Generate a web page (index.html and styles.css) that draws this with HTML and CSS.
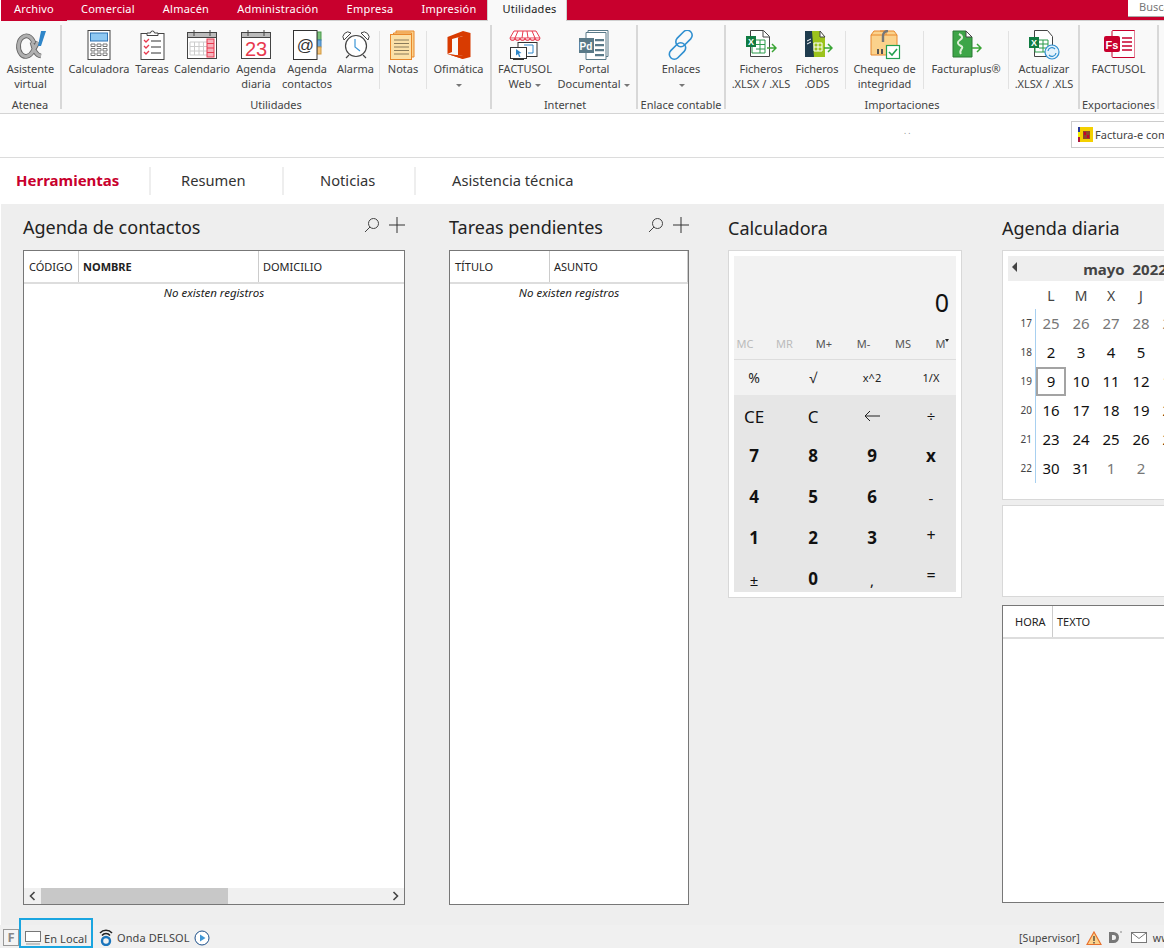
FILE: index.html
```html
<!DOCTYPE html>
<html lang="es">
<head>
<meta charset="utf-8">
<title>Utilidades</title>
<link rel="stylesheet" href="styles.css">
</head>
<body>
<div class="app">
  <header class="menubar">
    <nav class="menutabs">
      <span class="mtab t-archivo">Archivo</span>
      <span class="mtab">Comercial</span>
      <span class="mtab">Almacén</span>
      <span class="mtab">Administración</span>
      <span class="mtab">Empresa</span>
      <span class="mtab t-impresion">Impresión</span>
      <span class="mtab t-util active">Utilidades</span>
    </nav>
    <div class="searchbox">Buscar</div>
  </header>

  <section class="ribbon">
    <div class="group g-atenea">
      <div class="items">
        <div class="item w61">
          <svg class="ico" viewBox="0 0 32 30"><path d="M19 13C16 5 11 5 8 7 3 10 2 19 6 24c3 4 9 3 12-3l5-9M17 12c2 7 3 13 9 14" fill="none" stroke="#666" stroke-width="4.800"/><path d="M19 13C16 5 11 5 8 7 3 10 2 19 6 24c3 4 9 3 12-3l5-9M17 12c2 7 3 13 9 14" fill="none" stroke="#b0b0b0" stroke-width="3"/><path d="M26 1h5l-5 15h-3z" fill="#2f86c9"/></svg>
          <span>Asistente<br>virtual</span>
        </div>
      </div>
      <div class="glabel">Atenea</div>
    </div>

    <div class="group g-util">
      <div class="items">
        <div class="item w62">
          <svg class="ico" viewBox="0 0 32 30"><rect x="5" y="0.5" width="22" height="29" fill="#fff" stroke="#444"/><rect x="7.5" y="3" width="17" height="8" fill="#8ec8f2" stroke="#2e75b6"/><path d="M8 14h4v2.5H8zM14 14h4v2.5h-4zM20 14h4v2.5h-4zM8 18.5h4V21H8zM14 18.5h4V21h-4zM20 18.5h4V21h-4zM8 23h4v2.5H8zM14 23h4v2.5h-4zM20 23h4v2.5h-4z" fill="#fff" stroke="#777"/></svg>
          <span>Calculadora</span>
        </div>
        <div class="item w44">
          <svg class="ico" viewBox="0 0 32 30"><rect x="5" y="3.500" width="23" height="26" fill="#fff" stroke="#444"/><path d="M11 5V3h3.500a2 2 0 0 1 4 0H22v2.500H11z" fill="#fff" stroke="#444"/><path d="M8 10l2 2 3-3M8 16l2 2 3-3M8 22l2 2 3-3" fill="none" stroke="#e8394e" stroke-width="1.300"/><path d="M15 11h10M15 17h10M15 23h10" stroke="#333"/></svg>
          <span>Tareas</span>
        </div>
        <div class="item w56">
          <svg class="ico" viewBox="0 0 32 30"><rect x="1.500" y="2.500" width="29" height="26" fill="#fff" stroke="#444"/><rect x="1.500" y="2.500" width="29" height="5" fill="#bbb" stroke="#444"/><path d="M8 0v6M24 0v6" stroke="#444"/><path d="M4 12h18v13H4z" fill="#fff" stroke="#ccc"/><path d="M4 16.500h18M4 21h18M8.500 12v13M13 12v13M17.500 12v13" stroke="#ccc"/><rect x="21" y="9" width="7" height="18" fill="#f6b2bc" stroke="#e8394e"/><path d="M21 13.500h7M21 18h7M21 22.500h7" stroke="#e8394e"/></svg>
          <span>Calendario</span>
        </div>
        <div class="item w52">
          <svg class="ico" viewBox="0 0 32 30"><rect x="1.500" y="2.500" width="29" height="26" fill="#fff" stroke="#444"/><rect x="1.500" y="2.500" width="29" height="5" fill="#bbb" stroke="#444"/><path d="M8 0v6M24 0v6" stroke="#444"/><text x="16" y="26" text-anchor="middle" class="ico-num">23</text></svg>
          <span>Agenda<br>diaria</span>
        </div>
        <div class="item w50">
          <svg class="ico" viewBox="0 0 32 30"><rect x="26" y="2" width="4" height="8" fill="#7cc27c" stroke="#4a9a4a"/><rect x="26" y="10" width="4" height="7" fill="#6aa9dd" stroke="#3c7fb8"/><rect x="26" y="17" width="4" height="7" fill="#f2c27a" stroke="#d39a3e"/><rect x="2.500" y="0.500" width="23.500" height="29" fill="#fff" stroke="#333"/><text x="14.500" y="21" text-anchor="middle" class="ico-at">@</text></svg>
          <span>Agenda<br>contactos</span>
        </div>
        <div class="item w47">
          <svg class="ico" viewBox="0 0 32 30"><circle cx="16" cy="16" r="10.500" fill="#fff" stroke="#444" stroke-width="1.200"/><path d="M4 10a5 5 0 0 1 7-7zM28 10a5 5 0 0 0-7-7z" fill="#fff" stroke="#444"/><path d="M9 25l-3 3M23 25l3 3" stroke="#444" stroke-width="1.200"/><path d="M15 9v8l5 4" fill="none" stroke="#3f97d6" stroke-width="1.200"/></svg>
          <span>Alarma</span>
        </div>
        <i class="sep"></i>
        <div class="item w46">
          <svg class="ico" viewBox="0 0 32 30"><path d="M9 1h18v26H9z" fill="#fbd28c" stroke="#e8882c"/><path d="M6.500 3h18v26h-18z" fill="#fbd89c" stroke="#e8882c"/><rect x="3.500" y="4.500" width="21" height="25" fill="#fbe0a8" stroke="#e8882c"/><path d="M7 10h15M7 13.500h15M7 17h15M7 20.500h15M7 24h15" stroke="#8a7a5a"/></svg>
          <span>Notas</span>
        </div>
        <i class="sep"></i>
        <div class="item w63">
          <svg class="ico" viewBox="0 0 32 30"><path d="M4.500 7L20 1l7.500 2v24L20 29 4.500 24z" fill="#d83b01"/><path d="M9 9l11-3v20L4.500 24 9 22z" fill="#f9f9f9"/><path d="M15 7.400l5-1.400v20l-5-.7z" fill="#d83b01"/><path d="M4.500 24L20 26v3z" fill="#d83b01"/></svg>
          <span>Ofimática<br><b class="caret"></b></span>
        </div>
      </div>
      <div class="glabel">Utilidades</div>
    </div>

    <div class="group g-internet">
      <div class="items">
        <div class="item w62">
          <svg class="ico" viewBox="0 0 32 30"><path d="M5 1h22l4 7H1z" fill="#fff" stroke="#e8394e"/><path d="M1 8a2.500 2.500 0 0 0 5 0 2.500 2.500 0 0 0 5 0 2.500 2.500 0 0 0 5 0 2.500 2.500 0 0 0 5 0 2.500 2.500 0 0 0 5 0 2.500 2.500 0 0 0 5 0" fill="#f6b2bc" stroke="#e8394e"/><path d="M9 1L6 8M14 1l-1 7M18 1l1 7M23 1l3 7" stroke="#e8394e"/><rect x="9" y="12.500" width="19" height="14" fill="#fff" stroke="#333"/><path d="M15 15h9v8h-5" fill="none" stroke="#2e86c9"/><rect x="1.500" y="17.500" width="16" height="11" fill="#fff" stroke="#333"/><path d="M4 29.500h11" stroke="#333"/><path d="M7 19l5.500 4-2.500.5 1.500 3-1.500.5-1-3-2 1.500z" fill="#2e86c9"/></svg>
          <span>FACTUSOL<br>Web <b class="caret"></b></span>
        </div>
        <div class="item w76">
          <svg class="ico" viewBox="0 0 32 30"><path d="M10 .5h20v26H10z" fill="#fff" stroke="#5a7a88"/><path d="M8 2.500h20v27H8z" fill="#fff" stroke="#5a7a88"/><path d="M17 9h9v2.200h-9zM17 14h9v2.200h-9zM17 19h9v2.200h-9zM17 24h9v2.200h-9z" fill="#5a7a88"/><rect x="1" y="8" width="15" height="15" fill="#5a7a88"/><text x="8" y="20" text-anchor="middle" class="ico-pd">Pd</text></svg>
          <span>Portal<br>Documental <b class="caret"></b></span>
        </div>
      </div>
      <div class="glabel">Internet</div>
    </div>

    <div class="group g-enlace">
      <div class="items">
        <div class="item wfull">
          <svg class="ico" viewBox="0 0 32 30"><g fill="none" stroke="#2f8fd0" stroke-width="1.600"><rect x="14" y="-1" width="10" height="19" rx="5" transform="rotate(45 19 8.500)"/><rect x="7.500" y="11.500" width="10" height="19" rx="5" transform="rotate(45 12.500 21)"/></g></svg>
          <span>Enlaces<br><b class="caret"></b></span>
        </div>
      </div>
      <div class="glabel">Enlace contable</div>
    </div>

    <div class="group g-import">
      <div class="items">
        <div class="item w56">
          <svg class="ico" viewBox="0 0 32 30"><path d="M5.500.5h13l6 6v20h-19z" fill="#fff" stroke="#444"/><path d="M18 1v6h6" fill="none" stroke="#444"/><path d="M11 10h9v13H7v-6M11 14.500h9M11 19h9M15 10v13" fill="none" stroke="#2a9a4a"/><rect x="1" y="6" width="10" height="11" fill="#107c41"/><text x="6" y="15" text-anchor="middle" class="ico-x">X</text><path d="M22 18h9M27 14l4 4-4 4" fill="none" stroke="#3aa535" stroke-width="1.500"/></svg>
          <span>Ficheros<br>.XLSX / .XLS</span>
        </div>
        <div class="item w56">
          <svg class="ico" viewBox="0 0 32 30"><path d="M4 1h12v26H4z" fill="#1f3c4e"/><path d="M11 1h8l5 6v20H13z" fill="#9cc31c"/><path d="M19 1v6h5z" fill="#fff" stroke="#444"/><path d="M13 13h8v8h-8zM13 17h8M17 13v8" fill="none" stroke="#fff"/><path d="M6 11l4-2M6 14l4-2" stroke="#fff"/><path d="M23 18h8M27 14l4 4-4 4" fill="none" stroke="#3aa535" stroke-width="1.500"/></svg>
          <span>Ficheros<br>.ODS</span>
        </div>
        <i class="sep"></i>
        <div class="item w77">
          <svg class="ico" viewBox="0 0 32 30"><path d="M2 5l3-4h20l3 4v20H2z" fill="#fbd28c" stroke="#e8882c"/><path d="M2 5h26M11 1h6v4" fill="none" stroke="#e8882c"/><path d="M14 12V6c0-3 2-5 5-5" fill="none" stroke="#777" stroke-width="2.400"/><path d="M8 19h2v5H8zM12 19h2v5h-2z" fill="#555"/><rect x="17.500" y="15.500" width="13" height="13" fill="#fff" stroke="#22a050" stroke-width="1.200"/><path d="M20 22l3 3 5-6" fill="none" stroke="#22a050" stroke-width="1.600"/></svg>
          <span>Chequeo de<br>integridad</span>
        </div>
        <i class="sep"></i>
        <div class="item w84">
          <svg class="ico" viewBox="0 0 32 30"><path d="M3 1h13l6 6v20H3z" fill="#3da547" stroke="#2a7a34"/><path d="M16 1v6h6z" fill="#fff" stroke="#444"/><path d="M9 4c4 2 4 4 1 6s-3 4 1 6-3 4 0 8" fill="none" stroke="#dff0d8" stroke-width="2"/><path d="M22 18h9M27 14l4 4-4 4" fill="none" stroke="#3aa535" stroke-width="1.500"/></svg>
          <span>Facturaplus®</span>
        </div>
        <i class="sep"></i>
        <div class="item w70">
          <svg class="ico" viewBox="0 0 32 30"><path d="M6.500.5h13l5 6v20h-18z" fill="#fff" stroke="#444"/><path d="M11 10h9v12H7v-4M11 14h9M11 18h9M15 10v12" fill="none" stroke="#2a9a4a"/><rect x="1" y="7" width="10" height="11" fill="#107c41"/><text x="6" y="16" text-anchor="middle" class="ico-x">X</text><circle cx="24" cy="22" r="7" fill="#e4f2fb" stroke="#2f8fd0" stroke-width="1.200"/><path d="M20 21a4 4 0 0 1 7-2M28 23a4 4 0 0 1-7 2" fill="none" stroke="#2f8fd0" stroke-width="1.200"/></svg>
          <span>Actualizar<br>.XLSX / .XLS</span>
        </div>
      </div>
      <div class="glabel">Importaciones</div>
    </div>

    <div class="group g-export">
      <div class="items">
        <div class="item wfull">
          <svg class="ico" viewBox="0 0 32 30"><rect x="9" y=".5" width="23" height="27" rx="1" fill="#fff" stroke="#c8002d"/><path d="M19 8h10M19 12h10M19 16h10M19 20h10" stroke="#c8002d" stroke-width="1.500"/><rect x="1" y="6" width="16" height="16" rx="2" fill="#c8002d"/><text x="9" y="18.500" text-anchor="middle" class="ico-fs">Fs</text></svg>
          <span>FACTUSOL</span>
        </div>
      </div>
      <div class="glabel">Exportaciones</div>
    </div>
  </section>

  <div class="strip">
    <span class="dots">. .</span>
    <div class="fbutton">
      <svg class="flag" viewBox="0 0 15 15"><rect width="15" height="15" fill="#f4d000"/><rect width="2" height="5" fill="#2a3a9a"/><rect y="5" width="2" height="5" fill="#f4f000"/><rect y="10" width="2" height="5" fill="#b0183a"/><rect x="5" y="4" width="7" height="8" fill="#8a4a2a"/><path d="M6 5h2v3H6zM9 8h2v3H9z" fill="#c8002d"/></svg>
      <span>Factura-e común</span>
    </div>
  </div>

  <nav class="sections">
    <span class="sec s1 current">Herramientas</span>
    <span class="sec s2">Resumen</span>
    <span class="sec s3">Noticias</span>
    <span class="sec s4">Asistencia técnica</span>
  </nav>

  <main class="content">
    <section class="col c-contacts">
      <div class="coltitle"><h2>Agenda de contactos</h2>
        <div class="tools">
          <svg class="tool" viewBox="0 0 16 16"><circle cx="9.500" cy="6.500" r="5" fill="none" stroke="#444"/><path d="M6 10l-5 5" stroke="#444"/></svg>
          <svg class="tool" viewBox="0 0 16 16"><path d="M8 0v16M0 8h16" stroke="#333"/></svg>
        </div>
      </div>
      <div class="table">
        <div class="thead">
          <span class="th th-cod">CÓDIGO</span><span class="th th-nom">NOMBRE</span><span class="th th-dom">DOMICILIO</span>
        </div>
        <div class="empty">No existen registros</div>
        <div class="hscroll">
          <svg class="arrow" viewBox="0 0 8 10"><path d="M6 1L2 5l4 4" fill="none" stroke="#444" stroke-width="1.600"/></svg>
          <div class="track"><div class="thumb"></div></div>
          <svg class="arrow" viewBox="0 0 8 10"><path d="M2 1l4 4-4 4" fill="none" stroke="#444" stroke-width="1.600"/></svg>
        </div>
      </div>
    </section>

    <section class="col c-tasks">
      <div class="coltitle"><h2>Tareas pendientes</h2>
        <div class="tools">
          <svg class="tool" viewBox="0 0 16 16"><circle cx="9.500" cy="6.500" r="5" fill="none" stroke="#444"/><path d="M6 10l-5 5" stroke="#444"/></svg>
          <svg class="tool" viewBox="0 0 16 16"><path d="M8 0v16M0 8h16" stroke="#333"/></svg>
        </div>
      </div>
      <div class="table">
        <div class="thead">
          <span class="th th-tit">TÍTULO</span><span class="th th-asu">ASUNTO</span>
        </div>
        <div class="empty">No existen registros</div>
      </div>
    </section>

    <section class="col c-calc">
      <div class="coltitle low"><h2>Calculadora</h2></div>
      <div class="calc">
        <div class="calc-inner">
          <div class="display">0</div>
          <div class="memory">
            <span class="off">MC</span><span class="off">MR</span><span>M+</span><span>M-</span><span>MS</span><span>M<b class="mcaret"></b></span>
          </div>
          <div class="funcs">
            <span class="f-lg">%</span><span class="f-lg">√</span><span>x^2</span><span>1/X</span>
          </div>
          <div class="keys">
            <span class="k-op">CE</span><span class="k-op">C</span>
            <span class="k-op"><svg class="backarrow" viewBox="0 0 16 12"><path d="M16 6H1M6 1L1 6l5 5" fill="none" stroke="#222"/></svg></span>
            <span class="k-sym">÷</span>
            <span class="k-num">7</span><span class="k-num">8</span><span class="k-num">9</span><span class="k-num">x</span>
            <span class="k-num">4</span><span class="k-num">5</span><span class="k-num">6</span><span class="k-sym">-</span>
            <span class="k-num">1</span><span class="k-num">2</span><span class="k-num">3</span><span class="k-sym k-up">+</span>
            <span class="k-sym">±</span><span class="k-num">0</span><span class="k-sym">,</span><span class="k-sym k-up2">=</span>
          </div>
        </div>
      </div>
    </section>

    <section class="col c-agenda">
      <div class="coltitle low"><h2>Agenda diaria</h2></div>
      <div class="cal">
        <div class="calhead"><b class="tri-left"></b><strong>mayo&nbsp; 2022</strong><b class="tri-right"></b></div>
        <div class="calgrid">
          <span></span><span class="wd">L</span><span class="wd">M</span><span class="wd">X</span><span class="wd">J</span><span class="wd">V</span><span class="wd">S</span><span class="wd">D</span>
          <span class="wk">17</span><span class="d o">25</span><span class="d o">26</span><span class="d o">27</span><span class="d o">28</span><span class="d o">29</span><span class="d o">30</span><span class="d">1</span>
          <span class="wk">18</span><span class="d">2</span><span class="d">3</span><span class="d">4</span><span class="d">5</span><span class="d">6</span><span class="d">7</span><span class="d">8</span>
          <span class="wk">19</span><span class="d sel">9</span><span class="d">10</span><span class="d">11</span><span class="d">12</span><span class="d">13</span><span class="d">14</span><span class="d">15</span>
          <span class="wk">20</span><span class="d">16</span><span class="d">17</span><span class="d">18</span><span class="d">19</span><span class="d">20</span><span class="d">21</span><span class="d">22</span>
          <span class="wk">21</span><span class="d">23</span><span class="d">24</span><span class="d">25</span><span class="d">26</span><span class="d">27</span><span class="d">28</span><span class="d">29</span>
          <span class="wk">22</span><span class="d">30</span><span class="d">31</span><span class="d o">1</span><span class="d o">2</span><span class="d o">3</span><span class="d o">4</span><span class="d o">5</span>
        </div>
      </div>
      <div class="notebox"></div>
      <div class="table daytable">
        <div class="thead">
          <span class="th th-hora">HORA</span><span class="th th-texto">TEXTO</span>
        </div>
      </div>
    </section>
  </main>

  <footer class="status">
    <div class="st-left">
      <span class="fbox">F</span>
      <div class="local">
        <svg class="monitor" viewBox="0 0 16 14"><rect x=".5" y=".5" width="15" height="10" fill="#fff" stroke="#777"/><path d="M1 13h14" stroke="#999"/></svg>
        <span>En Local</span>
      </div>
      <div class="onda">
        <svg class="onda-ico" viewBox="0 0 14 17"><path d="M1 4a8 8 0 0 1 12 0M3 6.500a5 5 0 0 1 8 0" fill="none" stroke="#222" stroke-width="1.500"/><circle cx="7" cy="12" r="4" fill="none" stroke="#1b75bc" stroke-width="2.400"/></svg>
        <span>Onda DELSOL</span>
        <svg class="play" viewBox="0 0 16 16"><circle cx="8" cy="8" r="7" fill="#fff" stroke="#1b4f8a"/><path d="M6 4.500l5.500 3.500L6 11.500z" fill="#3f97d6"/></svg>
      </div>
    </div>
    <div class="st-right">
      <span class="sup">[Supervisor]</span>
      <svg class="warn" viewBox="0 0 16 14"><path d="M8 1l7 12.500H1z" fill="#fbd28c" stroke="#e8702c" stroke-width="1.200"/><path d="M8 5v5M8 11v1.500" stroke="#333" stroke-width="1.200"/></svg>
      <svg class="dlogo" viewBox="0 0 14 13"><path d="M1 1h4.500a5 5 0 0 1 0 11H1zM4 4v5h1.500a2.500 2.500 0 0 0 0-5z" fill="#777" fill-rule="evenodd"/><rect x="12" y="0" width="2" height="2" fill="#bbb"/></svg>
      <svg class="mail" viewBox="0 0 16 11"><rect x=".5" y=".5" width="15" height="10" fill="#fff" stroke="#777"/><path d="M1 1l7 5.500L15 1" fill="none" stroke="#777"/></svg>
      <span class="web">www.sdelsol.com</span>
    </div>
  </footer>
</div>
</body>
</html>
```
FILE: styles.css
```css
* { box-sizing: border-box; }
html, body { margin: 0; padding: 0; height: 100%; }
body {
  font-family: "Noto Sans", "Open Sans", "Liberation Sans", sans-serif;
  font-size: 11px;
  color: #333;
  background: #fff;
  overflow: hidden;
}
.app { width: 1164px; height: 948px; display: flex; flex-direction: column; overflow: hidden; position: relative; }

/* top menu */
.menubar {
  height: 21px; flex: none; display: flex; justify-content: space-between;
  margin-left: 1px; background: #c8002d; border-bottom: 1px solid #d0d0d0;
}
.menutabs { display: flex; }
.mtab { flex: none; height: 20px; padding: 0 14px; line-height: 17px; color: #fff; font-size: 11px; letter-spacing: .25px; white-space: nowrap; }
.t-archivo { width: 66px; padding-left: 13px; letter-spacing: .2px; box-shadow: 0 1px 0 #c8002d; }
.t-impresion { width: 80px; padding-right: 0; }
.t-util {
  width: 80px; color: #222; background: #f9f9f9; height: 21px;
  border-left: 1px solid #d0d0d0; border-right: 1px solid #d0d0d0;
}
.searchbox {
  width: 36px; height: 17px; background: #fff; color: #777; padding-left: 11px;
  line-height: 13px; border-bottom: 1px solid #aaa; overflow: hidden; white-space: nowrap;
}

/* ribbon */
.ribbon {
  height: 93px; flex: none; display: flex; background: #f9f9f9; padding-top: 4px;
  border-bottom: 1px solid #d4d4d4;
}
.group { height: 84px; display: flex; flex-direction: column; border-right: 2px solid #d8d8d8; flex: none; }
.g-atenea { width: 62px; }
.g-util { width: 430px; padding-left: 6px; }
.g-internet { width: 146px; padding-left: 2px; }
.g-enlace { width: 88px; }
.g-import { width: 354px; padding-left: 7px; }
.g-export { width: 79px; }
.items { height: 73px; display: flex; }
.glabel {
  height: 11px; line-height: 13px; text-align: center; color: #444; font-size: 11px; white-space: nowrap;
}
.g-util .glabel { margin-left: -6px; }
.g-import .glabel { margin-left: -7px; }
.item {
  flex: none; display: flex; flex-direction: column; align-items: center;
  padding-top: 5px; text-align: center; line-height: 15px; color: #444; white-space: nowrap;
}
.item > span { margin-top: 1px; }
.ico { width: 32px; height: 30px; display: block; flex: none; }
.ico-num { font: 20px "Liberation Sans", sans-serif; fill: #e8394e; }
.ico-at { font: 17px "Liberation Sans", sans-serif; fill: #333; }
.ico-pd { font: bold 10px "Liberation Sans", sans-serif; fill: #fff; }
.ico-x { font: bold 9px "Liberation Sans", sans-serif; fill: #fff; }
.ico-fs { font: bold 11px "Liberation Sans", sans-serif; fill: #fff; }
.w44 { width: 44px; } .w46 { width: 46px; } .w47 { width: 47px; } .w50 { width: 50px; }
.w52 { width: 52px; } .w56 { width: 56px; } .w61 { width: 61px; } .w62 { width: 62px; }
.w63 { width: 63px; } .w70 { width: 70px; } .w76 { width: 76px; } .w77 { width: 77px; }
.w84 { width: 84px; } .wfull { width: 100%; }
.sep { flex: none; width: 1px; height: 58px; margin-top: 6px; background: #e2e2e2; }
.caret {
  display: inline-block; width: 0; height: 0; vertical-align: middle; margin-left: 1px;
  border-left: 3px solid transparent; border-right: 3px solid transparent; border-top: 3px solid #777;
}

/* strip */
.strip {
  height: 44px; flex: none; display: flex; align-items: center; background: #fff;
  border-bottom: 1px solid #dcdcdc; overflow: hidden; white-space: nowrap;
}
.dots { width: 1071px; flex: none; padding-left: 904px; color: #888; font-size: 8px; line-height: 8px; margin-top: -10px; }
.fbutton {
  flex: none; width: 120px; height: 27px; margin-bottom: 2px; display: flex; align-items: center; gap: 2px;
  padding-left: 6px; border: 1px solid #ccc; color: #444; line-height: 1;
}
.flag { width: 15px; height: 15px; flex: none; }

/* section tabs */
.sections { height: 46px; flex: none; display: flex; align-items: center; background: #fff; padding-left: 16px; }
.sec { height: 28px; line-height: 26px; font-size: 14.700px; color: #333; border-right: 2px solid #eee; white-space: nowrap; }
.s1 { width: 135px; font-size: 15px; font-weight: 700; color: #c8002d; }
.s2 { width: 133px; padding-left: 30px; }
.s3 { width: 132px; padding-left: 36px; }
.s4 { padding-left: 36px; border-right: 0; }

/* main */
.content {
  flex: 1; min-height: 0; display: flex; align-items: flex-start; background: #eee;
  padding: 10px 0 0 23px; overflow: hidden; margin-left: 1px;
}
.col { flex: none; display: flex; flex-direction: column; }
.c-contacts { width: 382px; margin-left: -1px; margin-right: 44px; }
.c-tasks { width: 240px; margin-right: 39px; }
.c-calc { width: 234px; margin-right: 40px; }
.c-agenda { width: 240px; }
.coltitle { height: 36px; display: flex; justify-content: space-between; align-items: flex-start; }
.coltitle.low { padding-top: 1px; }
.coltitle h2 { margin: 0; font-size: 18px; font-weight: 400; color: #222; line-height: 26px; white-space: nowrap; }
.tools { display: flex; gap: 9px; padding-top: 3px; }
.tool { width: 16px; height: 16px; display: block; }

.table { height: 655px; background: #fff; border: 1px solid #777; position: relative; display: flex; flex-direction: column; }
.thead { height: 33px; flex: none; display: flex; border-bottom: 2px solid #ddd; color: #222; }
.th { line-height: 31px; padding-left: 5px; border-right: 1px solid #ccc; white-space: nowrap; font-size: 11px; }
.th-cod { width: 55px; }
.th-nom { width: 180px; font-weight: 700; padding-left: 4px; }
.th-dom { flex: 1; padding-left: 4px; border-right: 0; }
.th-tit { width: 100px; }
.th-asu { flex: 1; padding-left: 4px; }
.th-hora { width: 50px; padding-left: 12px; }
.th-texto { flex: 1; padding-left: 4px; border-right: 0; }
.empty { flex: 1; text-align: center; font-style: italic; font-size: 11.500px; color: #222; line-height: 18px; }
.hscroll { height: 16px; flex: none; display: flex; align-items: center; background: #f0f0f0; }
.arrow { width: 17px; height: 10px; flex: none; }
.track { flex: 1; height: 16px; }
.thumb { width: 187px; height: 16px; background: #c8c8c8; }

/* calculator */
.calc { height: 348px; background: #fff; border: 1px solid #d8d8d8; padding: 5px; }
.calc-inner { height: 336px; display: flex; flex-direction: column; background: #f2f2f2; overflow: hidden; }
.display { height: 76px; flex: none; text-align: right; padding-right: 7px; padding-top: 28px; font-size: 25px; line-height: 36px; color: #111; }
.memory {
  height: 28px; flex: none; display: flex; gap: 17.500px; align-items: center; padding-bottom: 4px;
  border-bottom: 1px solid #ddd; font-size: 11px; color: #555;
}
.memory span { width: 22px; flex: none; text-align: center; white-space: nowrap; }
.memory .off { color: #bbb; }
.mcaret {
  display: inline-block; vertical-align: top; margin-top: 3px;
  border-left: 2.500px solid transparent; border-right: 2.500px solid transparent; border-top: 3px solid #222;
}
.funcs, .keys { display: grid; grid-template-columns: repeat(4, 40px); column-gap: 19px; justify-items: center; align-items: center; }
.funcs { height: 35px; flex: none; font-size: 11px; color: #222; }
.f-lg { font-size: 14px; }
.keys { flex: 1; min-height: 0; grid-auto-rows: 41px; background: #e6e6e6; overflow: hidden; color: #111; }
.k-op { font-size: 17px; padding-top: 1px; }
.k-num { font-size: 17px; font-weight: 700; padding-bottom: 2px; }
.k-sym { font-size: 15px; }
.k-up { font-size: 16px; padding-bottom: 8px; }
.k-up2 { font-size: 16px; padding-bottom: 10px; }
.backarrow { width: 16px; height: 12px; display: block; }

/* calendar */
.cal { height: 250px; background: #fff; border: 1px solid #d8d8d8; padding: 5px 5px 0; }
.calhead { height: 25px; display: flex; justify-content: space-between; align-items: center; background: #eee; padding: 0 4px; color: #444; font-size: 15px; }
.calhead strong { padding-left: 6px; }
.tri-left, .tri-right { width: 0; height: 0; border-top: 5px solid transparent; border-bottom: 5px solid transparent; margin-top: -4px; }
.tri-left { border-right: 5px solid #444; }
.tri-right { border-left: 5px solid #444; }
.calgrid { display: grid; grid-template-columns: 28px repeat(7, 30px); grid-template-rows: 28px repeat(6, 29px); align-items: center; justify-items: center; }
.wd { font-size: 14px; color: #444; }
.wk { justify-self: stretch; align-self: stretch; border-right: 1px solid #a8d0f0; text-align: right; padding-right: 3px; font-size: 10px; line-height: 29px; color: #444; }
.d { justify-self: stretch; align-self: stretch; text-align: center; font-size: 15px; line-height: 29px; color: #111; }
.d.o { color: #777; }
.d.sel { border: 2px solid #a3a3a3; line-height: 25px; }
.notebox { height: 92px; margin-top: 5px; background: #fff; border: 1px solid #d8d8d8; }
.daytable { height: 298px; margin-top: 8px; }

/* status bar */
.status {
  position: absolute; left: 0; right: 0; bottom: 0; height: 30px; display: flex; align-items: flex-end;
  white-space: nowrap; color: #444; font-size: 11px; letter-spacing: .1px;
  background: linear-gradient(transparent 7px, #f0f0f0 7px);
}
.st-left { flex: none; width: 1019px; display: flex; align-items: flex-end; padding-left: 3px; }
.fbox {
  width: 16px; height: 17px; margin-bottom: 2px; border: 1px solid #999; background: #f4f4f4;
  text-align: center; line-height: 15px; font-weight: 700; color: #888; font-size: 13px; letter-spacing: 0;
}
.local {
  width: 74px; height: 30px; display: flex; align-items: center; gap: 3px; padding: 10px 0 0 4px;
  border: 2px solid #1aa5e0;
}
.monitor { width: 16px; height: 14px; flex: none; }
.onda { display: flex; align-items: center; gap: 4px; padding: 0 0 1px 6px; height: 20px; }
.onda-ico { width: 14px; height: 17px; flex: none; }
.play { width: 16px; height: 16px; flex: none; }
.st-right { flex: none; display: flex; align-items: center; height: 20px; padding-bottom: 1px; font-size: 10.500px; }
.warn { width: 16px; height: 14px; margin-left: 6px; flex: none; }
.dlogo { width: 14px; height: 13px; margin-left: 6px; flex: none; }
.mail { width: 16px; height: 11px; margin-left: 9px; flex: none; }
.web { margin-left: 6px; }
```
